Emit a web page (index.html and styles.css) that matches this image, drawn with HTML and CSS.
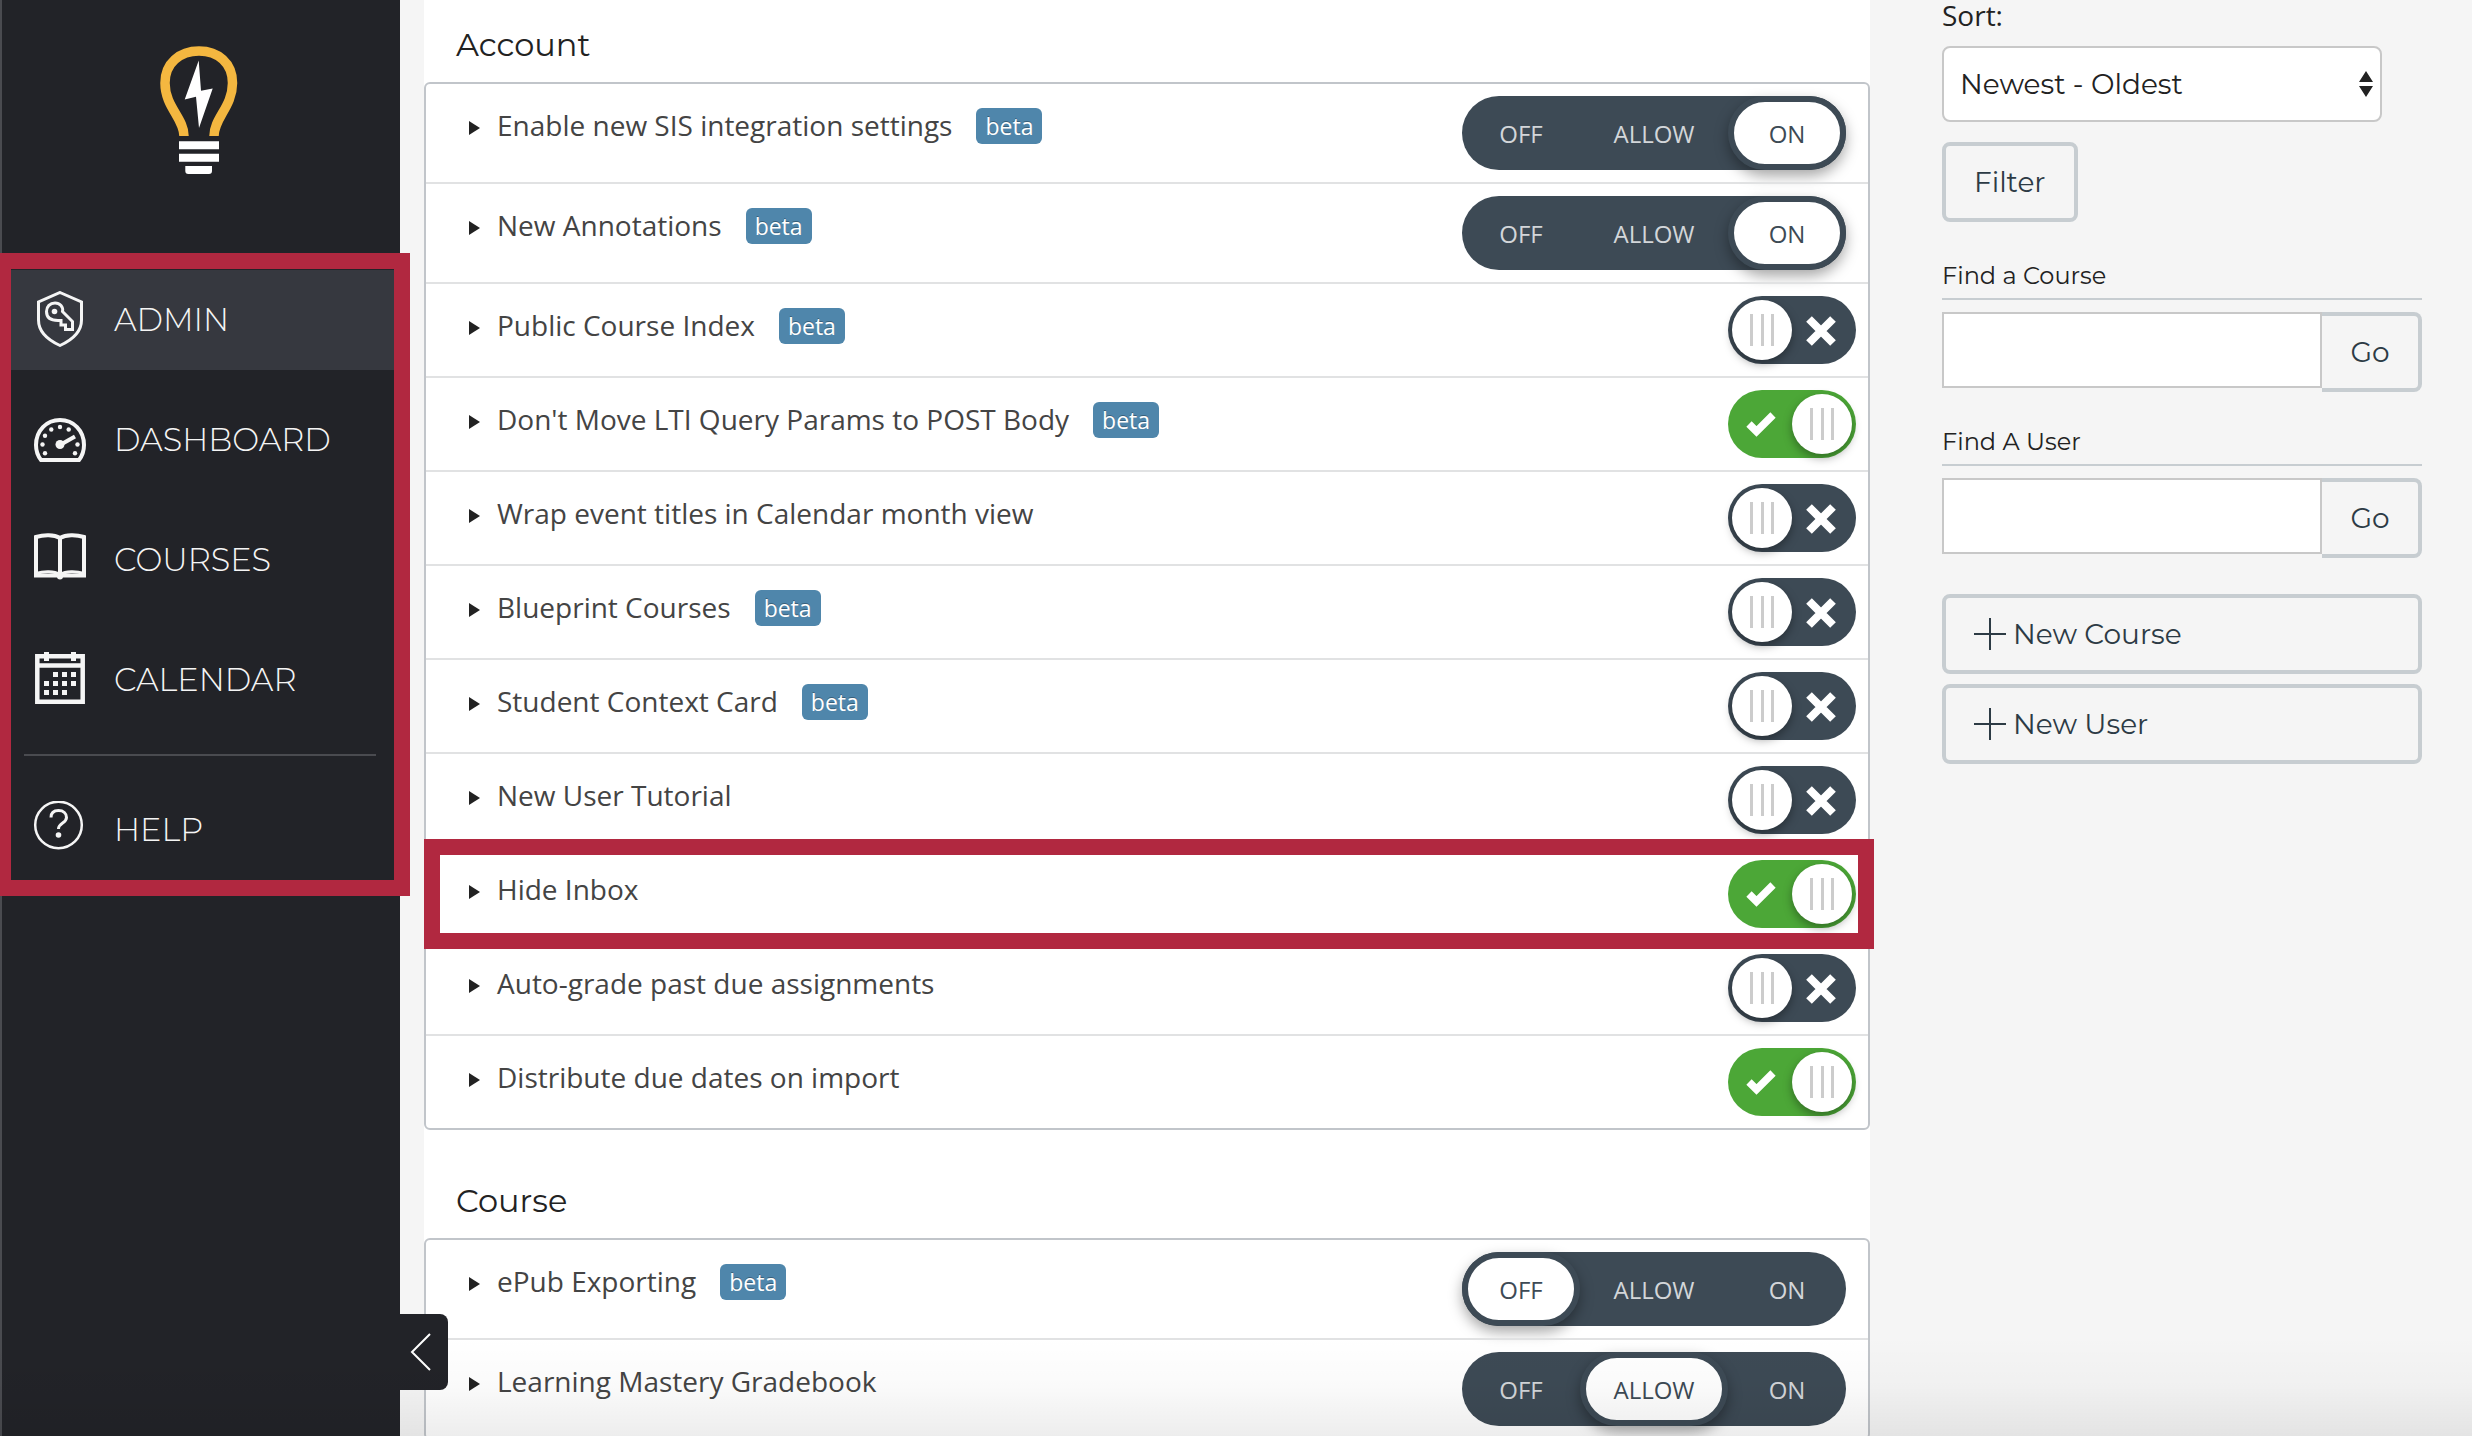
FILE: index.html
```html
<!DOCTYPE html>
<html lang="en">
<head>
  <meta charset="utf-8">
  <title>Feature Options</title>
  <meta name="viewport" content="width=device-width, initial-scale=1">
  <link rel="stylesheet" href="styles.css">
</head>
<body>
  <svg class="sprite" aria-hidden="true">
    <symbol id="icon-x" viewBox="0 0 30 30"><path d="M3 3 27 27M27 3 3 27" fill="none" stroke="#fff" stroke-width="8"/></symbol>
    <symbol id="icon-check" viewBox="0 0 30 30"><path d="M3 14 10.500 21.500 27 5" fill="none" stroke="#fff" stroke-width="7.500"/></symbol>
    <symbol id="icon-plus" viewBox="0 0 32 32"><path d="M0 16H32M16 0V32" fill="none" stroke="currentColor" stroke-width="2"/></symbol>
  </svg>

  <div class="app">
    <header class="sidebar">
      <a class="logo" href="#" aria-label="Home">
        <svg class="logo-icon" viewBox="160 46 78 128">
          <path d="M184 136C184 118 165 107 165 83C165 63 180 51 199 51C218 51 232.500 63 232.500 83C232.500 107 214 118 214 136" fill="none" stroke="#f4b740" stroke-width="9.500"/>
          <path d="M198.700 60.500 201 90.700 212.700 88.500 199 128 196 96.700 184.700 99.500Z" fill="#fff"/>
          <path d="M179 141.300H219V149.300H179ZM179 153.700H219V161.700H179ZM185.300 166H212V171Q212 174 209 174H188.300Q185.300 174 185.300 171Z" fill="#fff"/>
        </svg>
      </a>
      <nav class="nav">
        <a class="nav-item nav-item-active" href="#">
          <svg class="nav-icon" viewBox="0 0 56 56" fill="none" stroke="#f5f5f5" stroke-width="3">
            <path d="M28 1.500 49.500 11V29C49.500 41 39 49.500 28 54.500C17 49.500 6.500 41 6.500 29V11Z"/>
            <path d="M30.500 20.500 40.500 30.500V38.500H33.500V34H29V29.500H26C18 29.500 14.500 26 14.500 20.500C14.500 15.500 18 12 23 12C28 12 31.500 16 30.500 20.500Z"/>
            <circle cx="22.500" cy="20.500" r="2.800" fill="#f5f5f5" stroke="none"/>
          </svg>
          Admin
        </a>
        <a class="nav-item" href="#">
          <svg class="nav-icon" viewBox="0 0 56 56" fill="none" stroke="#f5f5f5" stroke-width="4">
            <path d="M9 49C5.500 44.500 4 39.500 4 34C4 19.500 14.500 9 28 9C41.500 9 52 19.500 52 34C52 39.500 50.500 44.500 47 49Z"/>
            <path d="M28 34 43 25.500"/>
            <g fill="#f5f5f5" stroke="none">
              <circle cx="28" cy="33.500" r="4.500"/>
              <circle cx="10.500" cy="33.500" r="2.200"/><circle cx="13" cy="42.300" r="2.200"/>
              <circle cx="13" cy="24.800" r="2.200"/><circle cx="19.300" cy="18.500" r="2.200"/>
              <circle cx="28" cy="16" r="2.200"/><circle cx="36.700" cy="18.500" r="2.200"/>
              <circle cx="45.500" cy="33.500" r="2.200"/><circle cx="43" cy="42.300" r="2.200"/>
            </g>
          </svg>
          Dashboard
        </a>
        <a class="nav-item" href="#">
          <svg class="nav-icon" viewBox="0 2 56 56" fill="none" stroke="#f5f5f5" stroke-width="4">
            <path d="M28 9C22 5.500 12 5.500 4 8V46.500H52V8C44 5.500 34 5.500 28 9V47"/>
            <path d="M4 44.500C12 42 22 42 28 45.500C34 42 44 42 52 44.500" stroke-width="3"/>
            <circle cx="28" cy="47.500" r="3" fill="#f5f5f5" stroke="none"/>
          </svg>
          Courses
        </a>
        <a class="nav-item" href="#">
          <svg class="nav-icon" viewBox="0 1 56 56" fill="none" stroke="#f5f5f5" stroke-width="4.500">
            <path d="M5.300 6.300H50.700V51.700H5.300ZM5.300 15.500H50.700"/>
            <path d="M14.500 2V11M41.500 2V11" stroke-width="5"/>
            <path d="M21 24.500h5m4 0h5m4 0h5M12 33.500h5m4 0h5m4 0h5m4 0h5M12 42.500h5m4 0h5m4 0h5" stroke-width="5"/>
          </svg>
          Calendar
        </a>
        <hr class="nav-rule">
        <a class="nav-item" href="#">
          <svg class="nav-icon" viewBox="0 0 56 56" fill="none" stroke="#f5f5f5" stroke-width="2.500">
            <circle cx="26.500" cy="24" r="23.300"/>
            <path d="M19 16.500C19 11.500 22 9.500 26.500 9.500C31.500 9.500 34.500 12.500 34.500 16.500C34.500 22.500 26.500 21.500 26.500 28" stroke-width="3"/>
            <circle cx="26.500" cy="34" r="2.800" fill="#f5f5f5" stroke="none"/>
          </svg>
          Help
        </a>
      </nav>
      <button class="collapse" type="button" aria-label="Minimize navigation">
        <svg class="collapse-icon" viewBox="0 0 22 38"><path d="M20 1 2 19 20 37" fill="none" stroke="#fff" stroke-width="2"/></svg>
      </button>
    </header>

    <main class="content">
      <section>
        <h2 class="heading">Account</h2>
        <ul class="features">
          <li class="feature">
            <button class="feature-name" type="button" id="f1">Enable new SIS integration settings</button>
            <span class="badge">beta</span>
            <div class="choice" role="radiogroup" aria-labelledby="f1">
              <label class="option"><input type="radio" name="r1">OFF</label>
              <label class="option option-wide"><input type="radio" name="r1">ALLOW</label>
              <label class="option"><input type="radio" name="r1" checked>ON</label>
            </div>
          </li>
          <li class="feature">
            <button class="feature-name" type="button" id="f2">New Annotations</button>
            <span class="badge">beta</span>
            <div class="choice" role="radiogroup" aria-labelledby="f2">
              <label class="option"><input type="radio" name="r2">OFF</label>
              <label class="option option-wide"><input type="radio" name="r2">ALLOW</label>
              <label class="option"><input type="radio" name="r2" checked>ON</label>
            </div>
          </li>
          <li class="feature">
            <button class="feature-name" type="button" id="f3">Public Course Index</button>
            <span class="badge">beta</span>
            <label class="switch"><input type="checkbox" aria-labelledby="f3"><svg class="mark mark-on"><use href="#icon-check"/></svg><svg class="mark mark-off"><use href="#icon-x"/></svg></label>
          </li>
          <li class="feature">
            <button class="feature-name" type="button" id="f4">Don't Move LTI Query Params to POST Body</button>
            <span class="badge">beta</span>
            <label class="switch"><input type="checkbox" aria-labelledby="f4" checked><svg class="mark mark-on"><use href="#icon-check"/></svg><svg class="mark mark-off"><use href="#icon-x"/></svg></label>
          </li>
          <li class="feature">
            <button class="feature-name" type="button" id="f5">Wrap event titles in Calendar month view</button>
            <label class="switch"><input type="checkbox" aria-labelledby="f5"><svg class="mark mark-on"><use href="#icon-check"/></svg><svg class="mark mark-off"><use href="#icon-x"/></svg></label>
          </li>
          <li class="feature">
            <button class="feature-name" type="button" id="f6">Blueprint Courses</button>
            <span class="badge">beta</span>
            <label class="switch"><input type="checkbox" aria-labelledby="f6"><svg class="mark mark-on"><use href="#icon-check"/></svg><svg class="mark mark-off"><use href="#icon-x"/></svg></label>
          </li>
          <li class="feature">
            <button class="feature-name" type="button" id="f7">Student Context Card</button>
            <span class="badge">beta</span>
            <label class="switch"><input type="checkbox" aria-labelledby="f7"><svg class="mark mark-on"><use href="#icon-check"/></svg><svg class="mark mark-off"><use href="#icon-x"/></svg></label>
          </li>
          <li class="feature">
            <button class="feature-name" type="button" id="f8">New User Tutorial</button>
            <label class="switch"><input type="checkbox" aria-labelledby="f8"><svg class="mark mark-on"><use href="#icon-check"/></svg><svg class="mark mark-off"><use href="#icon-x"/></svg></label>
          </li>
          <li class="feature feature-marked">
            <button class="feature-name" type="button" id="f9">Hide Inbox</button>
            <label class="switch"><input type="checkbox" aria-labelledby="f9" checked><svg class="mark mark-on"><use href="#icon-check"/></svg><svg class="mark mark-off"><use href="#icon-x"/></svg></label>
          </li>
          <li class="feature">
            <button class="feature-name" type="button" id="f10">Auto-grade past due assignments</button>
            <label class="switch"><input type="checkbox" aria-labelledby="f10"><svg class="mark mark-on"><use href="#icon-check"/></svg><svg class="mark mark-off"><use href="#icon-x"/></svg></label>
          </li>
          <li class="feature">
            <button class="feature-name" type="button" id="f11">Distribute due dates on import</button>
            <label class="switch"><input type="checkbox" aria-labelledby="f11" checked><svg class="mark mark-on"><use href="#icon-check"/></svg><svg class="mark mark-off"><use href="#icon-x"/></svg></label>
          </li>
        </ul>
      </section>
      <section>
        <h2 class="heading">Course</h2>
        <ul class="features">
          <li class="feature">
            <button class="feature-name" type="button" id="f12">ePub Exporting</button>
            <span class="badge">beta</span>
            <div class="choice" role="radiogroup" aria-labelledby="f12">
              <label class="option"><input type="radio" name="r12" checked>OFF</label>
              <label class="option option-wide"><input type="radio" name="r12">ALLOW</label>
              <label class="option"><input type="radio" name="r12">ON</label>
            </div>
          </li>
          <li class="feature">
            <button class="feature-name" type="button" id="f13">Learning Mastery Gradebook</button>
            <div class="choice" role="radiogroup" aria-labelledby="f13">
              <label class="option"><input type="radio" name="r13">OFF</label>
              <label class="option option-wide"><input type="radio" name="r13" checked>ALLOW</label>
              <label class="option"><input type="radio" name="r13">ON</label>
            </div>
          </li>
        </ul>
      </section>
    </main>

    <aside class="tools">
      <form class="sort">
        <label class="sort-label" for="sort">Sort:</label>
        <div class="select-wrap">
          <select class="select" id="sort"><option>Newest - Oldest</option></select>
          <svg class="select-arrows" viewBox="0 0 14 26"><path d="M7 0 14 11H0ZM7 26 0 15H14Z" fill="#222"/></svg>
        </div>
        <button class="button" type="button">Filter</button>
      </form>
      <form class="search">
        <label class="search-label" for="find-course">Find a Course</label>
        <div class="search-row">
          <input class="search-input" id="find-course" type="text">
          <button class="button button-go" type="button">Go</button>
        </div>
      </form>
      <form class="search">
        <label class="search-label" for="find-user">Find A User</label>
        <div class="search-row">
          <input class="search-input" id="find-user" type="text">
          <button class="button button-go" type="button">Go</button>
        </div>
      </form>
      <div class="actions">
        <button class="button button-new" type="button"><svg class="plus"><use href="#icon-plus"/></svg>New Course</button>
        <button class="button button-new" type="button"><svg class="plus"><use href="#icon-plus"/></svg>New User</button>
      </div>
    </aside>
    <div class="shade"></div>
  </div>
</body>
</html>
```
FILE: styles.css
```css
*, *::before, *::after { box-sizing: border-box; }

:root {
  --ui: Montserrat, Inter, sans-serif;
  --body: "Open Sans", "Noto Sans", sans-serif;
  --dark: #222328;
  --slate: #3d4a55;
  --ink: #2d3b45;
  --line: #c7cdd1;
  --red: #b12840;
}

body {
  margin: 0;
  background: #f5f5f5;
  color: #222;
  font-family: var(--body);
  font-size: 28px;
}

button, input, select { font: inherit; color: inherit; margin: 0; }
button { cursor: pointer; }

.sprite { display: none; }

.app {
  position: relative;
  display: flex;
  height: 100vh;
  overflow: hidden;
}

/* Sidebar */
.sidebar {
  position: relative;
  z-index: 2;
  flex: none;
  width: 400px;
  background: var(--dark);
  border-left: 2px solid #4a4b50;
}
.logo { display: block; padding: 46px 0 76px 158px; }
.logo-icon { display: block; width: 78px; height: 128px; }

.nav {
  position: relative;
  display: flex;
  flex-direction: column;
  margin-left: -2px;
}
.nav::after {
  content: "";
  position: absolute;
  inset: 3px -10px -16px 0;
  border: 16px solid var(--red);
  border-left-width: 11px;
  pointer-events: none;
}
.nav-item {
  display: flex;
  align-items: center;
  gap: 26px;
  height: 100px;
  margin-top: 20px;
  padding: 0 0 2px 32px;
  color: #f5f5f5;
  font-family: var(--ui);
  font-size: 32px;
  font-weight: 300;
  text-transform: uppercase;
  text-decoration: none;
}
.nav-item-active { background: #36383f; }
.nav-icon { flex: none; width: 56px; height: 56px; }
.nav-rule {
  height: 2px;
  margin: 24px 24px 4px;
  border: 0;
  background: #4a4b50;
}

.collapse {
  position: absolute;
  right: -48px;
  bottom: 46px;
  width: 48px;
  height: 76px;
  padding: 0 0 0 10px;
  border: 0;
  border-radius: 0 8px 8px 0;
  background: var(--dark);
}
.collapse-icon { display: block; width: 22px; height: 38px; }

/* Feature lists */
.content {
  flex: 1;
  min-width: 0;
  height: max-content;
  min-height: 100%;
  margin-left: 24px;
  background: #fff;
}
.heading {
  margin: 0;
  padding: 25px 32px 17px;
  font-family: var(--ui);
  font-size: 32px;
  font-weight: 400;
  line-height: 40px;
}
.features {
  margin: 0 0 26px;
  padding: 0;
  list-style: none;
  border: 2px solid #c1c5ca;
  border-radius: 6px;
}
.feature {
  position: relative;
  display: flex;
  align-items: flex-start;
  padding: 12px;
}
.feature + .feature { border-top: 2px solid #e1e2e3; }
.feature-marked::after {
  content: "";
  position: absolute;
  z-index: 1;
  inset: -9px -6px -9px -2px;
  border: 16px solid var(--red);
  pointer-events: none;
}
.feature-name {
  display: flex;
  align-items: center;
  gap: 17px;
  margin-left: 31px;
  padding: 10px 0 0;
  border: 0;
  background: none;
  color: #444;
  line-height: 38px;
}
.feature-name::before {
  content: "";
  margin-top: 6px;
  border: solid transparent;
  border-width: 7px 0 7px 11px;
  border-left-color: #222;
}
.badge {
  margin: 12px 0 0 24px;
  padding: 0 9px;
  border-radius: 6px;
  background: #4f86ab;
  color: #fff;
  font-size: 23px;
  line-height: 36px;
  text-shadow: 0 -1px 0 rgba(0, 0, 0, .3);
}

/* Three-way choice */
.choice {
  display: flex;
  margin: 0 10px 0 auto;
  border-radius: 37px;
  background: var(--slate);
}
.option {
  position: relative;
  display: grid;
  place-items: center;
  width: 118px;
  height: 74px;
  color: #d3d6d9;
  font-size: 24px;
  isolation: isolate;
}
.option-wide { width: 148px; }
.option input {
  appearance: none;
  position: absolute;
  z-index: -1;
  inset: 0;
  border-radius: 37px;
}
.option:has(input:checked) { color: var(--slate); }
.option input:checked {
  border: 6px solid var(--slate);
  background: #fff;
  box-shadow: 0 6px 14px rgba(0, 0, 0, .35);
}

/* On/off switch */
.switch {
  position: relative;
  display: flex;
  align-items: center;
  justify-content: space-between;
  width: 128px;
  height: 68px;
  margin-left: auto;
  padding: 2px 20px 0 18px;
  border-radius: 34px;
  background: var(--slate);
}
.switch:has(input:checked) { background: #4ca737; }
.mark { width: 30px; height: 30px; }
.switch input {
  appearance: none;
  position: absolute;
  top: 4px;
  left: 4px;
  width: 60px;
  height: 60px;
  border-radius: 50%;
  background:
    linear-gradient(#ccc, #ccc) 18px 14px / 3px 32px no-repeat,
    linear-gradient(#ccc, #ccc) 29px 14px / 3px 32px no-repeat,
    linear-gradient(#ccc, #ccc) 39px 14px / 3px 32px no-repeat,
    #fff;
  box-shadow: 0 4px 10px rgba(0, 0, 0, .35);
}
.switch input:checked { left: 64px; }

/* Right column */
.tools {
  flex: none;
  width: 602px;
  padding: 0 50px 0 72px;
  font-family: var(--ui);
}
.sort { margin-bottom: 38px; }
.sort-label {
  display: block;
  margin-bottom: 16px;
  font-family: var(--body);
  line-height: 30px;
}
.select-wrap { position: relative; width: 440px; margin-bottom: 20px; }
.select {
  appearance: none;
  display: block;
  width: 100%;
  height: 76px;
  padding: 0 16px;
  border: 2px solid #c8c8c8;
  border-radius: 8px;
  background: #fff;
}
.select-arrows {
  position: absolute;
  top: 25px;
  right: 9px;
  width: 14px;
  height: 26px;
  pointer-events: none;
}
.button {
  height: 80px;
  padding: 0 28px;
  border: 4px solid var(--line);
  border-radius: 8px;
  background: #f5f5f5;
  color: var(--ink);
}
.search { margin-bottom: 34px; }
.search-label {
  display: block;
  margin-bottom: 12px;
  padding-bottom: 6px;
  border-bottom: 2px solid var(--line);
  font-size: 24px;
  line-height: 32px;
}
.search-row { display: flex; align-items: flex-start; }
.search-input {
  flex: 1;
  min-width: 0;
  height: 76px;
  padding: 0 16px;
  border: 2px solid #c8c8c8;
  border-radius: 0;
  background: #fff;
}
.button-go { border-left: 0; border-radius: 0 8px 8px 0; width: 100px; }
.actions { display: grid; gap: 10px; margin-top: 36px; }
.button-new { display: flex; align-items: center; gap: 7px; }
.plus { width: 32px; height: 32px; }

/* Darkening towards the lower window edge */
.shade {
  position: absolute;
  z-index: 3;
  inset: auto 0 0;
  height: 100px;
  background: linear-gradient(transparent, rgba(0, 0, 0, .02) 50%, rgba(0, 0, 0, .07));
  pointer-events: none;
}
```
